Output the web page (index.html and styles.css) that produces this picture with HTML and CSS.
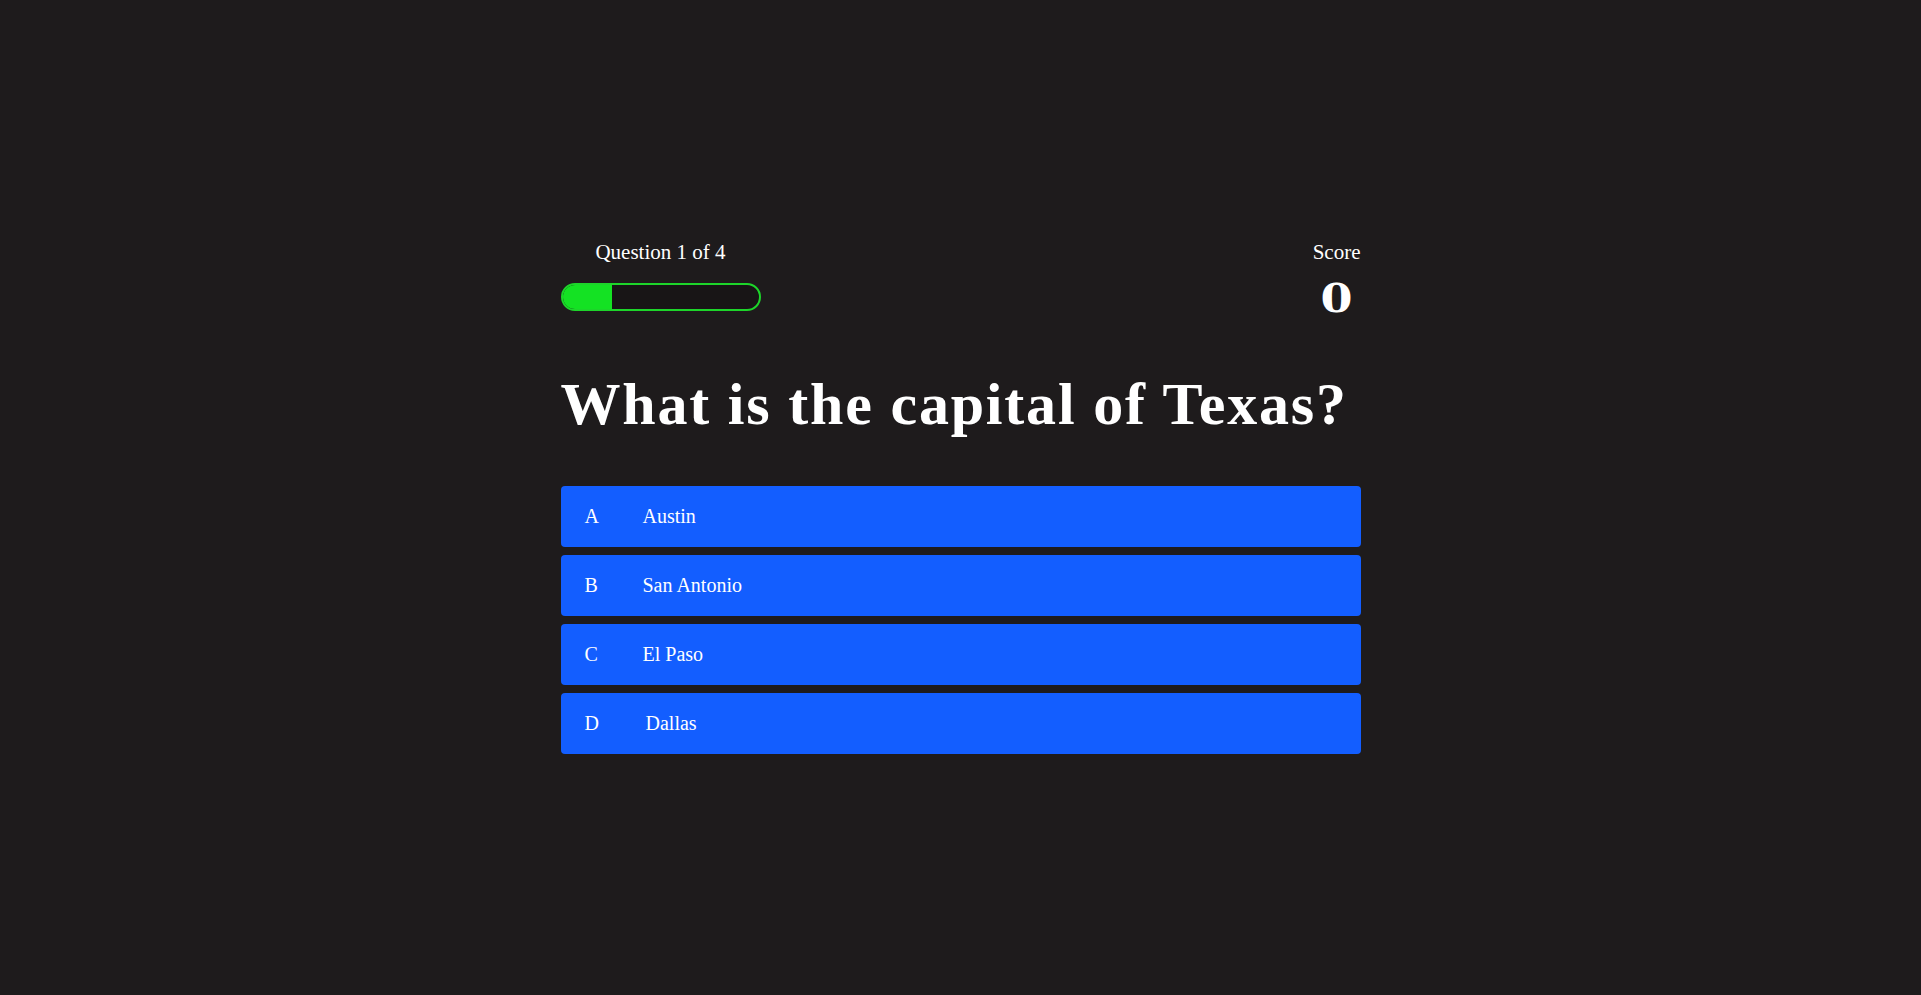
FILE: index.html
```html
<!DOCTYPE html>
<html lang="en">
<head>
<meta charset="utf-8">
<title>Quiz</title>
<link rel="stylesheet" href="styles.css">
</head>
<body>
<main class="page">
  <section class="quiz">
    <header class="quiz-header">
      <div class="progress-col">
        <div class="q-label">Question 1 of 4</div>
        <div class="bar"><div class="bar-fill" style="width:25%"></div></div>
      </div>
      <div class="score-col">
        <div class="score-label">Score</div>
        <div class="score-value">0</div>
      </div>
    </header>
    <h1 class="question">What is the capital of Texas?</h1>
    <ul class="answers">
      <li class="answer"><span class="letter">A</span><span class="text">Austin</span></li>
      <li class="answer"><span class="letter">B</span><span class="text">San Antonio</span></li>
      <li class="answer"><span class="letter">C</span><span class="text">El Paso</span></li>
      <li class="answer"><span class="letter">D</span><span class="text text-shift">Dallas</span></li>
    </ul>
  </section>
</main>
</body>
</html>
```
FILE: styles.css
```css
* { box-sizing: border-box; }
html, body { margin: 0; padding: 0; }
body {
  background: #1e1b1c;
  color: #ffffff;
  font-family: "Liberation Serif", "DejaVu Serif", serif;
}
.page {
  min-height: 100vh;
  display: flex;
  align-items: center;
  justify-content: center;
}
.quiz {
  width: 800px;
  display: flex;
  flex-direction: column;
}
.quiz-header {
  display: flex;
  justify-content: space-between;
  align-items: flex-start;
}
.progress-col {
  width: 200px;
  display: flex;
  flex-direction: column;
  align-items: center;
}
.q-label, .score-label {
  font-size: 21px;
  line-height: 24px;
  margin-top: -1px;
}
.bar {
  width: 200px;
  height: 28px;
  margin-top: 19px;
  border: 2px solid #1dd52a;
  border-radius: 14px;
  background: #181516;
  overflow: hidden;
}
.bar-fill {
  height: 100%;
  background: #14e223;
}
.score-col {
  display: flex;
  flex-direction: column;
  align-items: center;
}
.score-value {
  font-family: "DejaVu Serif", "Liberation Serif", serif;
  font-weight: bold;
  font-size: 39px;
  line-height: 39px;
  margin-top: 15px;
  transform: scaleX(1.18);
}
.question {
  margin: 50px 0 0 0;
  font-size: 60px;
  line-height: 72px;
  font-weight: bold;
  letter-spacing: 1.8px;
}
.answers {
  list-style: none;
  margin: 46px 0 0 0;
  padding: 0;
  display: flex;
  flex-direction: column;
  gap: 8px;
}
.answer {
  height: 61px;
  display: flex;
  align-items: center;
  padding: 0 24px;
  background: #135eff;
  border-radius: 4px;
  font-size: 20px;
}
.letter {
  width: 58px;
  flex: none;
}
.text-shift {
  padding-left: 3px;
}
```
